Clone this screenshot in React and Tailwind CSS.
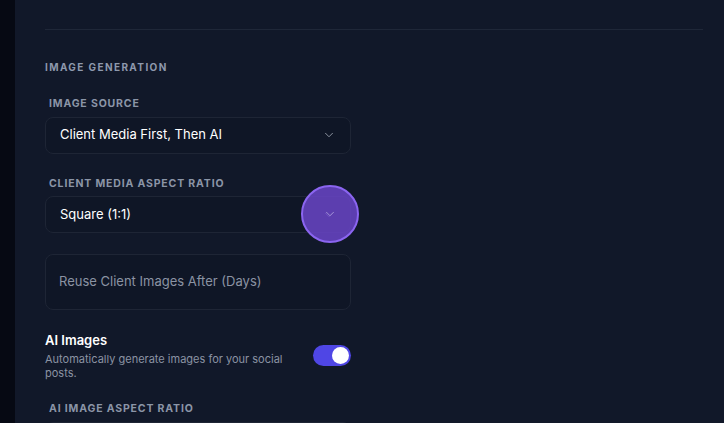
import { ChevronDown } from "lucide-react";

const font = { fontFamily: "Inter, 'Noto Sans', sans-serif" };

function FieldLabel({ children }) {
  return (
    <div className="pl-1 text-[10.5px] font-bold uppercase tracking-[0.08em] text-[#8b95a7] leading-none">
      {children}
    </div>
  );
}

function Select({ value, children }) {
  return (
    <div className="relative flex h-[37px] items-center justify-between rounded-lg border border-[#1e2535] bg-[#0f1626] pl-[14px] pr-[14px]">
      <span className="text-[13px] text-white">{value}</span>
      <ChevronDown className="h-[14px] w-[14px] text-[#9ca3af]" strokeWidth={1.5} />
      {children}
    </div>
  );
}

export default function App() {
  return (
    <div className="flex h-[423px] w-[724px] overflow-hidden bg-[#111829]" style={font}>
      {/* 左側邊欄 */}
      <div className="w-[15px] shrink-0 bg-[#060913]" />

      <div className="flex-1 pl-[30px] pr-[21px]">
        <div className="mt-[29px] h-px bg-[#1f2738]" />

        <div className="mt-[32px] text-[10px] font-bold uppercase tracking-[0.14em] text-[#8e99ad] leading-none">
          Image Generation
        </div>

        <div className="w-[306px]">
          <div className="mt-[27px]">
            <FieldLabel>Image Source</FieldLabel>
            <div className="mt-[7px]">
              <Select value="Client Media First, Then AI" />
            </div>
          </div>

          <div className="mt-[25px]">
            <FieldLabel>Client Media Aspect Ratio</FieldLabel>
            <div className="mt-[7px]">
              <Select value="Square (1:1)">
                {/* 點擊指示圈 */}
                <div className="absolute left-[255px] top-[-12px] flex h-[58px] w-[58px] items-center justify-center rounded-full border-2 border-[#8b65f0] bg-[#6a45c8]/85">
                  <ChevronDown className="h-[14px] w-[14px] text-[#a99bd8]" strokeWidth={1.5} />
                </div>
              </Select>
            </div>
          </div>

          <div className="mt-[21px] flex h-[56px] items-center rounded-lg border border-[#1e2535] bg-[#0f1626] pl-[13px]">
            <span className="text-[13px] text-[#8b93a3]">Reuse Client Images After (Days)</span>
          </div>

          <div className="mt-[24px] flex items-start justify-between">
            <div>
              <div className="text-[13px] font-semibold text-white leading-none">AI Images</div>
              <div className="mt-[5px] w-[250px] text-[11px] leading-[14px] text-[#8b93a3]">
                Automatically generate images for your social posts.
              </div>
            </div>
            <div className="mt-[11px] flex h-[21px] w-[38px] items-center justify-end rounded-full bg-[#4f46e5] px-[2px]">
              <div className="h-[17px] w-[17px] rounded-full bg-white" />
            </div>
          </div>

          <div className="mt-[24px]">
            <FieldLabel>AI Image Aspect Ratio</FieldLabel>
            <div className="mt-[7px]">
              <Select value="" />
            </div>
          </div>
        </div>
      </div>
    </div>
  );
}
